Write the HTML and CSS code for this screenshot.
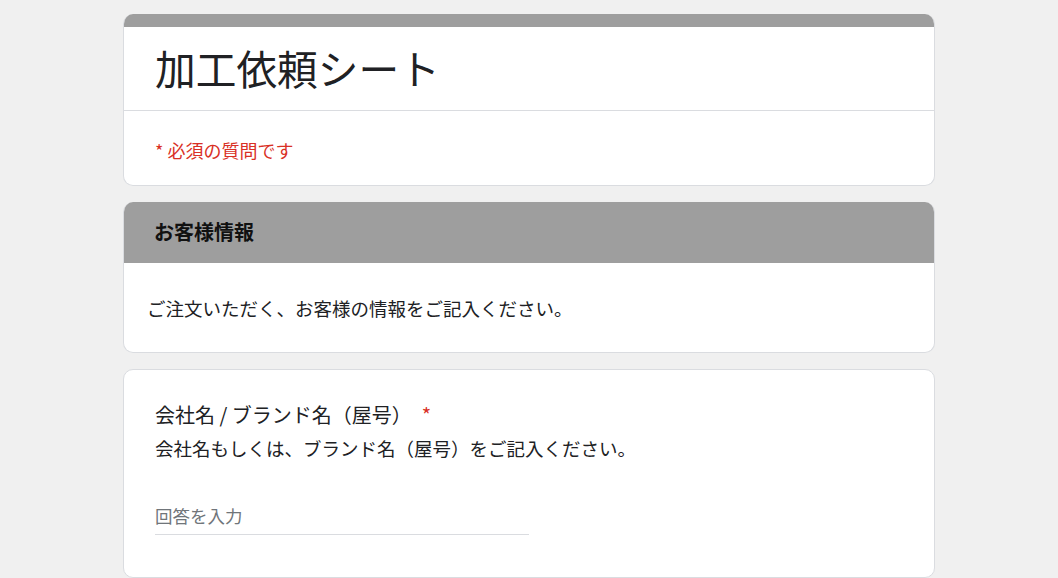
FILE: index.html
```html
<!DOCTYPE html>
<html lang="ja">
<head>
<meta charset="utf-8">
<title>加工依頼シート</title>
<link rel="stylesheet" href="styles.css">
</head>
<body>
<main class="page">
  <section class="card card-title">
    <div class="accent"></div>
    <div class="title-block">
      <h1 class="form-title">加工依頼シート</h1>
    </div>
    <div class="required-note">* 必須の質問です</div>
  </section>

  <section class="card card-section">
    <div class="section-head">お客様情報</div>
    <div class="section-desc">ご注文いただく、お客様の情報をご記入ください。</div>
  </section>

  <section class="card card-question">
    <div class="q-title">会社名 / ブランド名（屋号）<span class="req">*</span></div>
    <div class="q-desc">会社名もしくは、ブランド名（屋号）をご記入ください。</div>
    <div class="q-input">
      <span class="placeholder">回答を入力</span>
    </div>
  </section>
</main>
</body>
</html>
```

FILE: styles.css
```css
html, body {
  margin: 0;
  padding: 0;
  background: #f0f0f0;
  font-family: "Noto Sans CJK JP", "Noto Sans", sans-serif;
  color: #202124;
}

.page {
  display: flex;
  flex-direction: column;
  align-items: center;
  gap: 16px;
  padding-top: 14px;
}

.card {
  width: 812px;
  box-sizing: border-box;
  background: #ffffff;
  border: 1px solid #dadce0;
  border-radius: 10px;
  overflow: hidden;
}

.card-title {
  border-top: none;
}

.accent {
  height: 13px;
  background: #9e9e9e;
}

.title-block {
  padding: 16px 31px 17px;
  border-bottom: 1px solid #dadce0;
}

.form-title {
  margin: 0;
  font-size: 40.7px;
  font-weight: 400;
  line-height: 50px;
  color: #202124;
}

.required-note {
  padding: 26px 31px 21px;
  font-size: 18px;
  line-height: 27px;
  color: #d93025;
}

.card-section {
  border-top: none;
}

.section-head {
  background: #9e9e9e;
  height: 61px;
  box-sizing: border-box;
  padding: 15px 30px 0;
  font-size: 20px;
  font-weight: 700;
  line-height: 30px;
  color: #111111;
}

.section-desc {
  padding: 31px 23px 30px;
  font-size: 18.5px;
  line-height: 28px;
  color: #202124;
}

.card-question {
  padding: 30px 31px 42px;
}

.q-title {
  font-size: 20px;
  line-height: 30px;
  color: #202124;
}

.req {
  color: #d93025;
  padding-left: 10px;
  font-size: 20px;
}

.q-desc {
  margin-top: 4px;
  font-size: 18.5px;
  line-height: 28px;
  color: #202124;
}

.q-input {
  margin-top: 41px;
  width: 374px;
  border-bottom: 1px solid #dadce0;
  padding-bottom: 5px;
}

.placeholder {
  display: block;
  font-size: 17.5px;
  line-height: 26px;
  color: #70757a;
}
```
